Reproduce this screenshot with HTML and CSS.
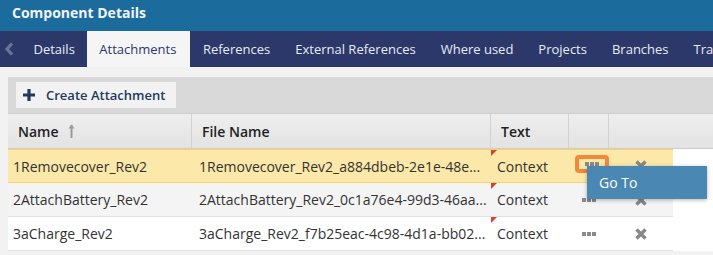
FILE: index.html
```html
<!DOCTYPE html>
<html lang="en">
<head>
    <meta charset="UTF-8">
    <title>Component Details</title>
    <link rel="stylesheet" href="styles.css">
</head>
<body>

<header class="title-bar">Component Details</header>

<nav class="tabs">
    <span class="tab-prev">
        <svg width="10" height="14" viewBox="0 0 10 14"><path d="M8 1.5 L3 7 L8 12.5" fill="none" stroke="#6a7494" stroke-width="3.2"/></svg>
    </span>
    <a class="tab" href="#">Details</a>
    <a class="tab active" href="#">Attachments</a>
    <a class="tab" href="#">References</a>
    <a class="tab" href="#">External References</a>
    <a class="tab" href="#">Where used</a>
    <a class="tab" href="#">Projects</a>
    <a class="tab" href="#">Branches</a>
    <a class="tab" href="#">Transitions</a>
</nav>

<main class="content">
    <div class="grid">
        <div class="toolbar">
            <button class="create-btn">
                <svg width="12" height="12" viewBox="0 0 12 12"><path d="M6 0 V12 M0 6 H12" stroke="#1e3a5c" stroke-width="3.2"/></svg>
                Create Attachment
            </button>
        </div>

        <div class="grid-head">
            <div class="hcell">Name
                <svg class="sort" width="7" height="14" viewBox="0 0 7 14"><path d="M3.5 1 V14" stroke="#9a9a9a" stroke-width="2"/><path d="M0.5 4.5 L3.5 0.5 L6.5 4.5 Z" fill="#9a9a9a"/></svg>
            </div>
            <div class="hcell">File Name</div>
            <div class="hcell">Text</div>
            <div class="hcell"></div>
            <div class="hcell last"></div>
        </div>

        <div class="grid-body">
            <div class="row selected">
                <div class="cell">1Removecover_Rev2</div>
                <div class="cell">1Removecover_Rev2_a884dbeb-2e1e-48e...</div>
                <div class="cell flagged">Context</div>
                <div class="cell action">
                    <button class="more-btn focused"><span class="dots"><i></i><i></i><i></i></span></button>
                    <div class="menu">Go To</div>
                </div>
                <div class="cell action">
                    <svg class="del" width="12" height="12" viewBox="0 0 12 12"><path d="M1.5 1.5 L10.5 10.5 M10.5 1.5 L1.5 10.5" stroke="#888" stroke-width="3.4"/></svg>
                </div>
            </div>
            <div class="row alt">
                <div class="cell">2AttachBattery_Rev2</div>
                <div class="cell">2AttachBattery_Rev2_0c1a76e4-99d3-46aa...</div>
                <div class="cell flagged">Context</div>
                <div class="cell action">
                    <button class="more-btn"><span class="dots"><i></i><i></i><i></i></span></button>
                </div>
                <div class="cell action">
                    <svg class="del" width="12" height="12" viewBox="0 0 12 12"><path d="M1.5 1.5 L10.5 10.5 M10.5 1.5 L1.5 10.5" stroke="#888" stroke-width="3.4"/></svg>
                </div>
            </div>
            <div class="row">
                <div class="cell">3aCharge_Rev2</div>
                <div class="cell">3aCharge_Rev2_f7b25eac-4c98-4d1a-bb02...</div>
                <div class="cell flagged">Context</div>
                <div class="cell action">
                    <button class="more-btn"><span class="dots"><i></i><i></i><i></i></span></button>
                </div>
                <div class="cell action">
                    <svg class="del" width="12" height="12" viewBox="0 0 12 12"><path d="M1.5 1.5 L10.5 10.5 M10.5 1.5 L1.5 10.5" stroke="#888" stroke-width="3.4"/></svg>
                </div>
            </div>
        </div>
    </div>
</main>

</body>
</html>
```

FILE: styles.css
```css
/* Общие стили */
html, body {
    margin: 0;
    padding: 0;
    font-family: 'Open Sans', 'Liberation Sans', sans-serif;
    background-color: #f2f2f2;
    color: #333333;
    overflow: hidden;
}

.title-bar {
    height: 31px;
    line-height: 26px;
    padding: 0 12px;
    background-color: #1b6b9c;
    color: #f2f4f7;
    font-size: 14px;
    font-weight: 700;
}

/* Вкладки */
.tabs {
    display: flex;
    height: 36px;
    background-color: #2b3869;
    white-space: nowrap;
    overflow: hidden;
}

.tab-prev {
    display: flex;
    align-items: center;
    padding: 0 7px 0 4px;
}

.tab {
    display: block;
    padding: 0 12.5px;
    line-height: 36px;
    font-size: 13px;
    color: #e8ebf3;
    text-decoration: none;
}

.tab.active {
    background-color: #f5f5f5;
    color: #2b3869;
    padding: 0 14px 0 12px;
}

/* Таблица вложений */
.content {
    padding: 10px 0 0 8px;
}

.grid {
    background-color: #ffffff;
}

.toolbar {
    height: 36px;
    padding: 5px 8px;
    box-sizing: border-box;
    background-color: #d9d9d9;
}

.create-btn {
    display: flex;
    align-items: center;
    gap: 11px;
    height: 26px;
    padding: 0 9px 0 7px;
    width: 160px;
    border: none;
    background-color: #f2f2f2;
    font-family: inherit;
    font-size: 13px;
    font-weight: 600;
    color: #1e3a5c;
}

.grid-head {
    display: grid;
    grid-template-columns: 184px 299px 78px 40px 1fr;
    height: 36px;
    box-sizing: border-box;
    border-top: 1px solid #cdcdcd;
    border-bottom: 1px solid #cdcdcd;
    background: linear-gradient(#eeeeee, #e3e3e3);
}

.hcell {
    display: flex;
    align-items: center;
    gap: 9px;
    padding: 0 10px;
    border-right: 1px solid #d2d2d2;
    font-size: 14px;
    font-weight: 600;
    color: #222222;
}

.hcell.last {
    border-right: none;
}

.grid-body {
    width: 665px;
}

.row {
    display: grid;
    grid-template-columns: 184px 299px 78px 40px 64px;
    height: 34px;
    box-sizing: border-box;
    border-bottom: 1px solid #e2e2e2;
    background-color: #ffffff;
}

.row.alt {
    background-color: #f4f4f4;
}

.row.selected {
    background-color: #fce8a8;
    border-top: 1px solid #f4d36d;
    border-bottom-color: #f4d36d;
}

.cell {
    display: flex;
    align-items: center;
    padding: 0 5px;
    font-size: 14px;
    white-space: nowrap;
    overflow: hidden;
    position: relative;
}

.cell + .cell {
    padding-left: 7px;
}

.cell.flagged {
    padding-left: 6px;
}

/* Красный треугольник в углу ячейки */
.cell.flagged::before {
    content: "";
    position: absolute;
    top: 0;
    left: 0;
    border-top: 6px solid #d9412f;
    border-right: 6px solid transparent;
}

.cell.action {
    justify-content: center;
    padding: 0;
    overflow: visible;
}

.more-btn {
    display: flex;
    align-items: center;
    justify-content: center;
    width: 32px;
    height: 20px;
    padding: 0;
    border: 3px solid transparent;
    border-radius: 4px;
    background: transparent;
    box-sizing: border-box;
}

.more-btn.focused {
    width: 35px;
    height: 18px;
    border-color: #f5873a;
    border-width: 4px;
    margin: -4px 0 0 6px;
}

.dots {
    display: flex;
    gap: 1px;
}

.dots i {
    display: block;
    width: 4px;
    height: 4px;
    background-color: #8a8a8a;
}

/* Всплывающее меню */
.menu {
    position: absolute;
    top: 16px;
    left: 18px;
    width: 120px;
    height: 33px;
    padding-left: 12px;
    box-sizing: border-box;
    line-height: 33px;
    background-color: #4a87b3;
    color: #ffffff;
    font-size: 14px;
    box-shadow: 0 1px 4px rgba(0, 0, 0, 0.3);
    z-index: 2;
}
```
